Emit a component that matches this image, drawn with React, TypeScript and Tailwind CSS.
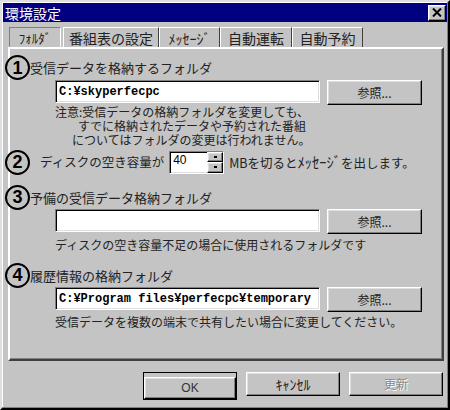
import React from "react";

const jp = "font-['Noto_Sans_CJK_JP',sans-serif]";
const raised =
  "border border-t-white border-l-white border-r-black border-b-black shadow-[inset_-1px_-1px_0_#808080,inset_1px_1px_0_#dfdfdf]";
const sunken =
  "border border-t-[#808080] border-l-[#808080] border-r-white border-b-white shadow-[inset_1px_1px_0_#000,inset_-1px_-1px_0_#dfdfdf]";

function Num({ n }: { n: string }) {
  return (
    <div className="w-[25px] h-[25px] shrink-0 -ml-[5px] rounded-full border-[2.5px] border-black bg-[#c4c4c4] flex items-center justify-center text-[18px] font-bold leading-none text-black font-['Liberation_Sans',sans-serif]">
      {n}
    </div>
  );
}

function Browse() {
  return (
    <button className={`h-[25px] w-[95px] bg-[#c4c4c4] ${raised} text-[12px] text-[#222] flex items-center justify-center ${jp}`}>
      参照...
    </button>
  );
}

function PathBox({ value }: { value: string }) {
  return (
    <div className={`h-[23px] w-[265px] bg-white ${sunken} px-[3px] flex items-center text-[12px] font-bold text-black whitespace-nowrap overflow-hidden font-['Liberation_Mono',monospace]`}>
      {value}
    </div>
  );
}

export default function App() {
  const tabs = [
    { label: "番組表の設定", w: "w-[96px]", size: "text-[14px]" },
    { label: "ﾒｯｾｰｼﾞ", w: "w-[61px]", size: "text-[14px]" },
    { label: "自動運転", w: "w-[72px]", size: "text-[14px]" },
    { label: "自動予約", w: "w-[71px]", size: "text-[14px]" },
  ];

  return (
    <div className={`w-[450px] h-[410px] bg-[#c4c4c4] border-2 border-t-[#dfdfdf] border-l-[#dfdfdf] border-r-black border-b-black shadow-[inset_-1px_-1px_0_#808080,inset_1px_1px_0_white] p-[1px] flex flex-col text-[#222] ${jp}`}>
      {/* title bar */}
      <div className="h-[19px] bg-[#000080] flex items-center justify-between pl-[2px] pr-[1px]">
        <span className="text-white text-[14px] leading-none">環境設定</span>
        <div className={`w-[18px] h-[16px] bg-[#c4c4c4] ${raised} flex items-center justify-center`}>
          <svg width="10" height="9" viewBox="0 0 10 9">
            <path d="M1 0.5 L9 8.5 M9 0.5 L1 8.5" stroke="#000" strokeWidth="2" />
          </svg>
        </div>
      </div>

      {/* tabs */}
      <div className="mt-[5px] pl-[6px] flex items-end h-[20px]">
        <div className="w-[52px] h-[20px] mr-[2px] border border-t-[#808080] border-l-[#808080] border-r-white border-b-[#c4c4c4] flex items-center justify-center text-[13px] leading-none">
          ﾌｫﾙﾀﾞ
        </div>
        {tabs.map((t) => (
          <div
            key={t.label}
            className={`${t.w} h-[20px] border-l border-l-white border-r border-r-[#404040] border-t border-t-white flex items-center justify-center ${t.size} leading-none`}
          >
            {t.label}
          </div>
        ))}
      </div>

      {/* panel */}
      <div className="ml-[5px] w-[436px] h-[314px] border-2 border-t-white border-l-white border-r-[#404040] border-b-[#404040] shadow-[inset_-1px_-1px_0_#808080] flex flex-col">
        {/* 1 */}
        <div className="mt-[6px] h-[25px] flex items-center">
          <Num n="1" />
          <span className="text-[13px] leading-none">受信データを格納するフォルダ</span>
        </div>
        <div className="pl-[45px] flex items-start gap-[7px]">
          <PathBox value="C:¥skyperfecpc" />
          <Browse />
        </div>
        <div className="pl-[45px] text-[12px] leading-[14px] whitespace-nowrap">
          <div>注意:受信データの格納フォルダを変更しても、</div>
          <div className="pl-[23px]">すでに格納されたデータや予約された番組</div>
          <div className="pl-[17px]">についてはフォルダの変更は行われません。</div>
        </div>

        {/* 2 */}
        <div className="mt-[3px] h-[24px] flex items-center">
          <Num n="2" />
          <span className="ml-[10px] text-[12.5px] leading-none">ディスクの空き容量が</span>
          <div className={`ml-[5px] w-[55px] h-[23px] bg-white ${sunken} flex`}>
            <span className="flex-1 pl-[3px] pt-[2px] text-[12px] leading-none text-black font-['Liberation_Sans',sans-serif]">40</span>
            <div className="w-[16px] flex flex-col">
              <div className={`flex-1 bg-[#c4c4c4] ${raised} flex items-center justify-center`}>
                <div className="w-[3px] h-[2px] bg-black" />
              </div>
              <div className={`flex-1 bg-[#c4c4c4] ${raised} flex items-center justify-center`}>
                <div className="w-[3px] h-[2px] bg-black" />
              </div>
            </div>
          </div>
          <span className="ml-[5px] text-[12.5px] leading-none whitespace-nowrap">
            MBを切ると<span className="text-[14.5px]">ﾒｯｾｰｼﾞ</span>を出します。
          </span>
        </div>

        {/* 3 */}
        <div className="mt-[11px] h-[24px] flex items-center">
          <Num n="3" />
          <span className="text-[13px] leading-none">予備の受信データ格納フォルダ</span>
        </div>
        <div className="pl-[45px] flex items-start gap-[7px]">
          <PathBox value="" />
          <Browse />
        </div>
        <div className="pl-[45px] mt-[4px] text-[12px] leading-[14px] whitespace-nowrap">
          ディスクの空き容量不足の場合に使用されるフォルダです
        </div>

        {/* 4 */}
        <div className="mt-[11px] h-[24px] flex items-center">
          <Num n="4" />
          <span className="text-[13px] leading-none">履歴情報の格納フォルダ</span>
        </div>
        <div className="pl-[45px] flex items-start gap-[7px]">
          <PathBox value="C:¥Program files¥perfecpc¥temporary" />
          <Browse />
        </div>
        <div className="pl-[45px] mt-[3px] text-[12px] leading-[14px] whitespace-nowrap">
          受信データを複数の端末で共有したい場合に変更してください。
        </div>
      </div>

      {/* buttons */}
      <div className="mt-[11px] pr-[4px] flex justify-end gap-[9px]">
        <div className="border border-black">
          <button className={`w-[92px] h-[22px] bg-[#c4c4c4] ${raised} text-[12px] font-['Liberation_Sans',sans-serif] text-[#333]`}>
            OK
          </button>
        </div>
        <button className={`w-[94px] h-[24px] bg-[#c4c4c4] ${raised} text-[14px] leading-none`}>ｷｬﾝｾﾙ</button>
        <button className={`w-[94px] h-[24px] bg-[#c4c4c4] ${raised} text-[12px] text-[#8a8a8a] [text-shadow:1px_1px_0_white]`}>
          更新
        </button>
      </div>
    </div>
  );
}
